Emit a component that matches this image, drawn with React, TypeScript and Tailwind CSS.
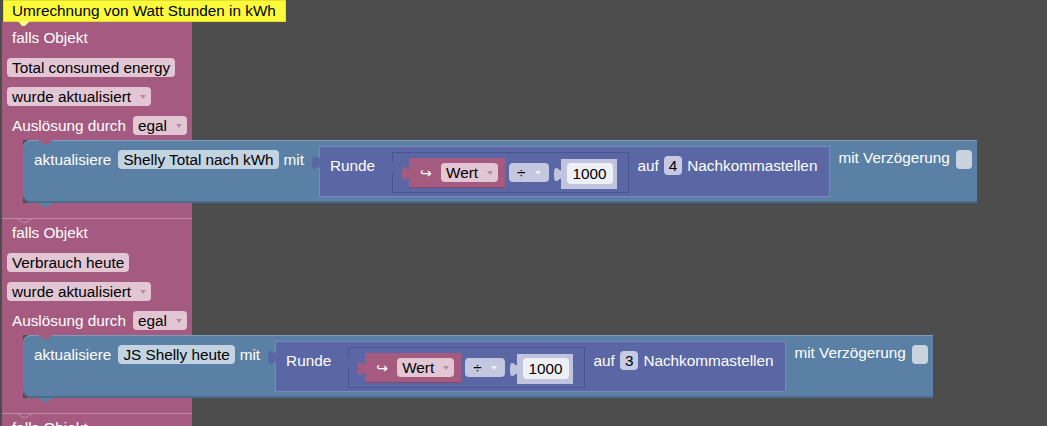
import React from "react";

const Caret = ({ className }: { className: string }) => (
  <span className={"ml-[9px] h-0 w-0 border-x-[3px] border-t-[4px] border-x-transparent " + className} />
);

const Field = ({ children, className }: { children: React.ReactNode; className: string }) => (
  <div className={"flex h-[19px] w-fit items-center rounded-[4px] px-[5px] text-black " + className}>{children}</div>
);

// left-hand value tab of a block
const Tab = ({ color, top }: { color: string; top: string }) => (
  <svg width="9" height="20" viewBox="0 0 9 20" className={"absolute -left-[8px] " + top}>
    <path d="M9 0 V5 C9 15 1 -3 1 12.5 S9 10 9 20 Z" fill={color} />
  </svg>
);

const RoundBlock = ({ digits }: { digits: string }) => (
  <div className="relative ml-[15px] mt-[6px] flex h-[51px] items-start bg-[#5b67a5] pl-[11px] pr-[13px] text-white shadow-[inset_1px_1px_0_#7d87bf,inset_-1px_-1px_0_#7d87bf]">
    <Tab color="#5b67a5" top="top-[4px]" />
    <div className="mt-[10px] flex h-[19px] items-center">Runde</div>

    <div className="relative ml-[17px] mt-[6px] flex h-[41px] items-start bg-[#5b67a5] pl-[17px] pr-[12px] shadow-[inset_0_0_0_1px_#4a5491]">
      <Tab color="#5b67a5" top="top-[3px]" />
      <div className="relative mt-[6px] flex h-[30px] items-start bg-[#a55b80] pl-[11px] pr-[7px] shadow-[inset_0_-1px_0_#84486a]">
        <Tab color="#a55b80" top="top-[3px]" />
        <span className="mt-[5px] flex h-[19px] w-[14px] items-center font-['DejaVu_Sans'] text-[14px]">↪</span>
        <Field className="ml-[7px] mt-[5px] bg-[#e2c6d4]">
          Wert
          <Caret className="border-t-[#b48ea0]" />
        </Field>
      </div>
      <Field className="ml-[4px] mt-[11px] bg-[#c3c7e0] px-[8px] text-[#eef0f8]">
        ÷
        <Caret className="ml-[8px] border-t-[#eef0f8]" />
      </Field>
      <div className="relative ml-[12px] mt-[7px] flex h-[30px] items-start bg-[#c0c4de] pl-[6px] pr-[4px]">
        <Tab color="#c0c4de" top="top-[3px]" />
        <div className="mt-[4px] flex h-[21px] items-center rounded-[4px] bg-[#eef0f6] px-[6px] text-black">1000</div>
      </div>
    </div>

    <div className="ml-[9px] mt-[10px] flex h-[19px] items-center">
      auf
      <Field className="ml-[5px] w-[20px] justify-center bg-[#c6cbe3] px-0">{digits}</Field>
      <span className="ml-[5px]">Nachkommastellen</span>
    </div>
  </div>
);

const SetBlock = ({ target, digits }: { target: string; digits: string }) => (
  <div className="relative flex h-[63px] items-start rounded-l-[8px] bg-[#5b80a5] pl-[11px] pr-[5px] text-white shadow-[inset_0_1px_0_#7f9dba,inset_0_-2px_0_#4b6c8e]">
    <svg width="15" height="4" viewBox="0 0 15 4" className="absolute left-[15px] top-0">
      <path d="M0 0 L6 4 L9 4 L15 0 Z" fill="#a55b80" />
    </svg>
    <svg width="15" height="4" viewBox="0 0 15 4" className="absolute left-[15px] top-full">
      <path d="M0 0 L6 4 L9 4 L15 0 Z" fill="#5b80a5" />
    </svg>
    <div className="mt-[10px] flex h-[19px] items-center">
      aktualisiere
      <Field className="ml-[7px] bg-[#c3d3e2]">{target}</Field>
      <span className="ml-[5px]">mit</span>
    </div>
    <RoundBlock digits={digits} />
    <div className="ml-[8px] mt-[10px] flex h-[19px] items-center">
      <span className="mb-[4px]">mit Verzögerung</span>
      <div className="ml-[6px] h-[19px] w-[16px] rounded-[4px] bg-[#c9d3de]" />
    </div>
  </div>
);

const EventBlock = ({
  trigger,
  target,
  digits,
  first,
}: {
  trigger: string;
  target?: string;
  digits?: string;
  first?: boolean;
}) => (
  <div className="flex flex-col">
    <div className={"relative w-[190px] bg-[#a55b80] pb-[5px] pl-[5px] text-white " + (first ? "pt-[2px]" : "")}>
      {!first && (
        <svg width="15" height="5" viewBox="0 0 15 5" className="absolute -top-[1px] left-[15px]">
          <polyline points="0,0.5 6,4.5 9,4.5 15,0.5" fill="none" stroke="#c18ca6" strokeWidth="1" />
        </svg>
      )}
      <div className="flex h-[28px] items-center pl-[5px]">falls Objekt</div>
      <Field className="mt-[6px] bg-[#e2c6d4]">{trigger}</Field>
      <Field className="mt-[10px] bg-[#e2c6d4]">
        wurde aktualisiert
        <Caret className="border-t-[#b48ea0]" />
      </Field>
      <div className="mt-[10px] flex items-center pl-[5px]">
        Auslösung durch
        <Field className="ml-[7px] bg-[#e2c6d4]">
          egal
          <Caret className="border-t-[#b48ea0]" />
        </Field>
      </div>
    </div>
    {target && digits && (
      <>
        <div className="flex">
          <div className="w-[21px] bg-[#a55b80]" />
          <SetBlock target={target} digits={digits} />
        </div>
        <div className="h-[16px] w-[190px] border-b border-b-[#c08aa5] bg-[#a55b80]" />
      </>
    )}
  </div>
);

export default function App() {
  return (
    <div className="relative h-[426px] w-[1047px] overflow-hidden bg-[#4d4d4d] font-['Liberation_Sans',Arial,sans-serif] text-[15.3px] leading-none">
      <div className="flex flex-col pl-[2px] pt-[22px]">
        <EventBlock first trigger="Total consumed energy" target="Shelly Total nach kWh" digits="4" />
        <EventBlock trigger="Verbrauch heute" target="JS Shelly heute" digits="3" />
        <EventBlock trigger="Xyz" />
      </div>

      {/* comment bubble */}
      <div className="absolute left-[3px] top-0 flex h-[22px] w-[283px] items-center border border-[#e2e22a] bg-[#fbfb3c] pl-[8px] text-black">
        Umrechnung von Watt Stunden in kWh
      </div>
      <svg width="12" height="6" viewBox="0 0 12 6" className="absolute left-[18px] top-[21px]">
        <path d="M0 0 L12 0 L7 5 L4 5 Z" fill="#fdfd8a" />
      </svg>
    </div>
  );
}
